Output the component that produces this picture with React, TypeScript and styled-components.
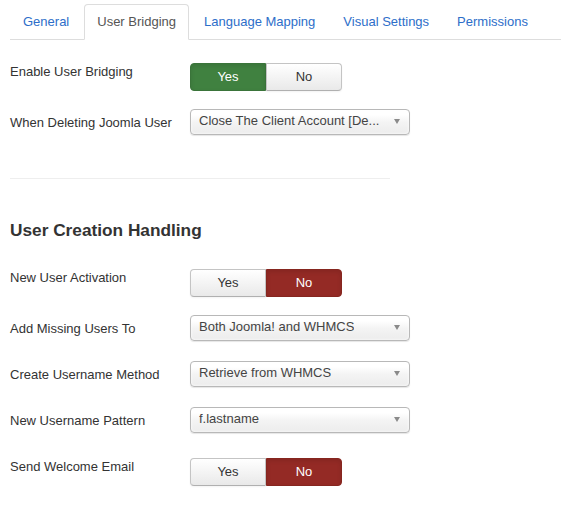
import React from "react";
import styled, { createGlobalStyle, css } from "styled-components";

const Global = createGlobalStyle`
  html, body { margin: 0; padding: 0; background: #fff; }
  body { font-family: "Liberation Sans", Arial, sans-serif; font-size: 13px; line-height: 18px; color: #333; }
  * { box-sizing: border-box; }
`;

const Page = styled.div`
  padding: 4px 0 0 10px;
  width: 561px;
`;

const TabBar = styled.ul`
  display: flex;
  margin: 0;
  padding: 0;
  list-style: none;
  border-bottom: 1px solid #ddd;
`;

const Tab = styled.li<{ $active?: boolean }>`
  padding: 8px 12px;
  line-height: 18px;
  margin: 0 2px -1px 0;
  border: 1px solid transparent;
  border-radius: 4px 4px 0 0;
  color: #2d6ec9;
  white-space: nowrap;
  ${(p) =>
    p.$active &&
    css`
      color: #555;
      background: #fff;
      border-color: #ddd #ddd transparent;
    `}
`;

const Content = styled.div`
  padding-top: 18px;
`;

const Row = styled.div<{ $toggle?: boolean }>`
  display: grid;
  grid-template-columns: 180px auto;
  align-items: start;
  margin-bottom: 18px;
  min-height: ${(p) => (p.$toggle ? 33 : 28)}px;
`;

const Label = styled.label`
  padding-top: 5px;
  line-height: 18px;
  color: #333;
  white-space: nowrap;
`;

const Toggle = styled.div`
  display: flex;
  margin-top: 5px;
`;

const ToggleBtn = styled.div<{ $state: "off" | "yes" | "no" }>`
  width: 76px;
  height: 28px;
  padding: 4px 12px;
  line-height: 18px;
  text-align: center;
  border: 1px solid #c4c4c4;
  border-bottom-color: #b0b0b0;
  background: linear-gradient(#ffffff, #e9e9e9);
  color: #333;
  box-shadow: inset 0 1px 0 rgba(255, 255, 255, 0.2), 0 1px 2px rgba(0, 0, 0, 0.05);
  &:first-child { border-radius: 4px 0 0 4px; }
  &:last-child { border-radius: 0 4px 4px 0; }
  ${(p) =>
    p.$state === "yes" &&
    css`
      background: #408140;
      border-color: #3a743a;
      color: #fff;
      box-shadow: inset 0 2px 4px rgba(0, 0, 0, 0.1);
    `}
  ${(p) =>
    p.$state === "no" &&
    css`
      background: #942a25;
      border-color: #86261f;
      color: #fff;
      box-shadow: inset 0 2px 4px rgba(0, 0, 0, 0.1);
    `}
`;

const Select = styled.div`
  display: flex;
  align-items: flex-start;
  justify-content: space-between;
  width: 220px;
  height: 26px;
  padding: 2px 8px 0 8px;
  border: 1px solid #b8b8b8;
  border-radius: 4px;
  background: linear-gradient(#ffffff 20%, #f4f4f4 50%, #ececec 100%);
  box-shadow: inset 0 0 3px #fff, 0 1px 1px rgba(0, 0, 0, 0.1);
  color: #444;
  line-height: 18px;
`;

const SelectText = styled.span`
  white-space: nowrap;
  overflow: hidden;
`;

const Arrow = styled.span`
  width: 0;
  height: 0;
  margin-top: 7px;
  margin-right: 1px;
  border-left: 3px solid transparent;
  border-right: 3px solid transparent;
  border-top: 5px solid #8a8a8a;
`;

const Divider = styled.hr`
  width: 380px;
  margin: 41px 0 0 0;
  border: 0;
  border-top: 1px solid #eee;
`;

const Heading = styled.h3`
  margin: 41px 0 24px 0;
  font-size: 17.25px;
  line-height: 20px;
  font-weight: bold;
  color: #333;
`;

type Field =
  | { label: string; kind: "toggle"; value: "yes" | "no" }
  | { label: string; kind: "select"; value: string };

const FieldRow: React.FC<{ field: Field }> = ({ field }) => (
  <Row $toggle={field.kind === "toggle"}>
    <Label>{field.label}</Label>
    {field.kind === "toggle" ? (
      <Toggle>
        <ToggleBtn $state={field.value === "yes" ? "yes" : "off"}>Yes</ToggleBtn>
        <ToggleBtn $state={field.value === "no" ? "no" : "off"}>No</ToggleBtn>
      </Toggle>
    ) : (
      <Select>
        <SelectText>{field.value}</SelectText>
        <Arrow />
      </Select>
    )}
  </Row>
);

const first: Field[] = [
  { label: "Enable User Bridging", kind: "toggle", value: "yes" },
  { label: "When Deleting Joomla User", kind: "select", value: "Close The Client Account [De..." },
];

const second: Field[] = [
  { label: "New User Activation", kind: "toggle", value: "no" },
  { label: "Add Missing Users To", kind: "select", value: "Both Joomla! and WHMCS" },
  { label: "Create Username Method", kind: "select", value: "Retrieve from WHMCS" },
  { label: "New Username Pattern", kind: "select", value: "f.lastname" },
  { label: "Send Welcome Email", kind: "toggle", value: "no" },
];

const tabs = ["General", "User Bridging", "Language Mapping", "Visual Settings", "Permissions"];

export default function App() {
  return (
    <>
      <Global />
      <Page>
        <TabBar>
          {tabs.map((t) => (
            <Tab key={t} $active={t === "User Bridging"}>
              {t}
            </Tab>
          ))}
        </TabBar>
        <Content>
          {first.map((f) => (
            <FieldRow key={f.label} field={f} />
          ))}
          <Divider />
          <Heading>User Creation Handling</Heading>
          {second.map((f) => (
            <FieldRow key={f.label} field={f} />
          ))}
        </Content>
      </Page>
    </>
  );
}
